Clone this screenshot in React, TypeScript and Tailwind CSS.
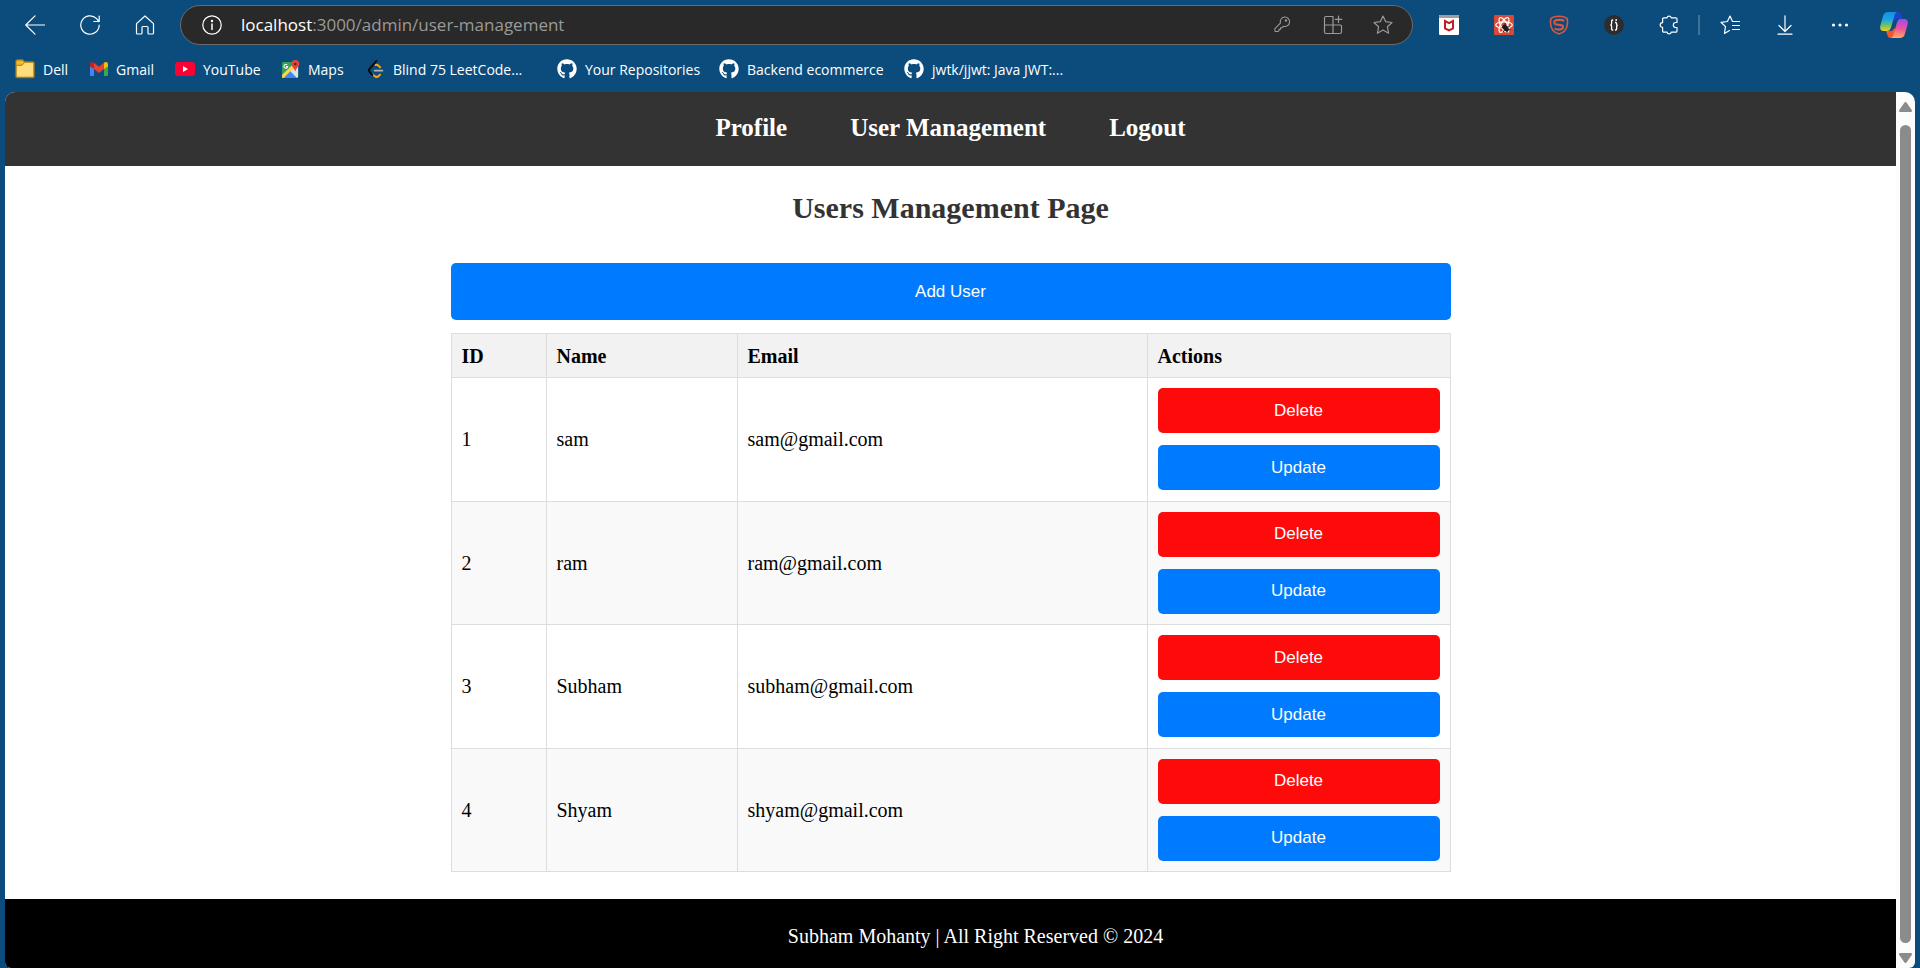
import type { ReactNode } from "react";
import { FaGithub } from "react-icons/fa";

type IconProps = { className?: string; children: ReactNode; box?: string };

function Line({ className = "size-5", children, box = "0 0 20 20" }: IconProps) {
  return (
    <svg className={className} viewBox={box} fill="none" stroke="currentColor" strokeWidth="1.2" strokeLinecap="round" strokeLinejoin="round" aria-hidden="true">
      {children}
    </svg>
  );
}

const BackIcon = () => (
  <Line>
    <path d="M19.500 10H.8M10 .8L.8 10l9.200 9.200" />
  </Line>
);

const ReloadIcon = () => (
  <Line>
    <path d="M19.200 10a9.200 9.200 0 1 1-2.600-6.400L19 6.500M19.200 1v5.500h-5.500" />
  </Line>
);

const HomeIcon = () => (
  <Line>
    <path d="M1.500 8.600L10 1l8.500 7.600V18a1 1 0 0 1-1 1H14a1 1 0 0 1-1-1v-5.500a1 1 0 0 0-1-1H8a1 1 0 0 0-1 1V18a1 1 0 0 1-1 1H2.500a1 1 0 0 1-1-1z" />
  </Line>
);

const InfoIcon = () => (
  <Line>
    <circle cx="10" cy="10" r="9.200" />
    <path d="M10 9v5.500" strokeWidth="1.500" />
    <circle cx="10" cy="6" r="0.600" fill="currentColor" />
  </Line>
);

const KeyIcon = () => (
  <Line className="size-[18px]">
    <path d="M12 1.200a5.200 5.200 0 1 1-1.300 10.200L9 13H7.300v1.800H5.500v1.500l-1 1H1.800a.8.8 0 0 1-.8-.8v-2.600l6.100-6.100A5.200 5.200 0 0 1 12 1.200z" />
    <circle cx="13.300" cy="5" r="0.800" />
  </Line>
);

const AppsIcon = () => (
  <Line>
    <path d="M10 1.500H3A1.500 1.500 0 0 0 1.500 3v14A1.500 1.500 0 0 0 3 18.500h14a1.500 1.500 0 0 0 1.500-1.500v-6a1 1 0 0 0-1-1h-16M10 1.500v17M15.500 1v6.500M12.200 4.300h6.600" />
  </Line>
);

const StarIcon = () => (
  <Line>
    <path d="M10 1l2.700 5.700 6.300.8-4.600 4.300 1.200 6.400L10 15.100l-5.600 3.100 1.200-6.400L1 7.500l6.300-.8z" />
  </Line>
);

const FavoritesIcon = () => (
  <Line>
    <path d="M18.500 6.500h-6L10 1 7.400 6.500 1 7.300l4.500 4.300L4.400 18.500 9.500 15.600M12.500 10.500h7M12.500 14.500h7M12.500 6.500h7" />
  </Line>
);

const PuzzleIcon = () => (
  <Line>
    <path d="M8 2.800a2.200 2.200 0 0 1 4.300 0h4.500a1.200 1.200 0 0 1 1.200 1.200v3.500h-1.200a2.500 2.500 0 0 0 0 5H18V16a1.200 1.200 0 0 1-1.200 1.200h-4.500a2.200 2.200 0 0 1-4.300 0H4.800A1.200 1.200 0 0 1 3.600 16v-3.600a2.400 2.400 0 0 1 0-4.800V4a1.200 1.200 0 0 1 1.200-1.200z" />
  </Line>
);

const DownloadIcon = () => (
  <Line>
    <path d="M10 .8v15.400M4 10.500l6 6 6-6M3 19.200h14" />
  </Line>
);

const MoreIcon = () => (
  <svg className="size-[18px]" viewBox="0 0 18 18" fill="currentColor" aria-hidden="true">
    <circle cx="2.500" cy="9" r="1.600" />
    <circle cx="9" cy="9" r="1.600" />
    <circle cx="15.500" cy="9" r="1.600" />
  </svg>
);

const ShieldExtensionIcon = () => (
  <svg className="size-5" viewBox="0 0 20 20" aria-hidden="true">
    <rect width="20" height="20" rx="1" fill="#fff" />
    <path d="M1 0h18a1 1 0 0 1 1 1v2H0V1a1 1 0 0 1 1-1z" fill="#a39da0" />
    <path d="M6 6v7.300l4 2 4-2V6l-4 2.200z" fill="none" stroke="#c01f26" strokeWidth="2" />
  </svg>
);

const ReactExtensionIcon = () => (
  <svg className="size-5" viewBox="0 0 20 20" aria-hidden="true">
    <rect width="20" height="20" rx="1" fill="#d94936" />
    <g fill="none" stroke="#fff" strokeWidth="1.300">
      <ellipse cx="10" cy="10" rx="8.300" ry="3.200" />
      <ellipse cx="10" cy="10" rx="8.300" ry="3.200" transform="rotate(60 10 10)" />
      <ellipse cx="10" cy="10" rx="8.300" ry="3.200" transform="rotate(120 10 10)" />
    </g>
    <ellipse cx="11.500" cy="13" rx="2.500" ry="3.800" transform="rotate(-40 11.500 13)" fill="#1b1b1b" />
    <path d="M7.500 12.500l3 .5M9 17l2-2.500M15.500 11.500l-3 1M11 8l.5 3M16.500 15l-3-.5M13 18v-3" stroke="#1b1b1b" />
  </svg>
);

const SExtensionIcon = () => (
  <svg className="size-5" viewBox="0 0 20 20" fill="none" stroke="#d9583f" aria-hidden="true">
    <path d="M10 1.200C6.500 1.200 3.500 2 1.900 3.600 1 8.500 1.500 12.500 4 15.500c1.700 1.800 3.800 3 6 3.600 2.200-.6 4.300-1.800 6-3.600 2.500-3 3-7 2.100-11.900C16.500 2 13.500 1.200 10 1.200z" strokeWidth="1.600" />
    <path d="M15.300 5.800C13 4.600 7.500 4.600 6 5.700c-1.200 1-.9 3 .6 3.500 1.900.6 4.500.4 6.300 1.100 1.500.7 1.500 2.700.2 3.500-1.900 1-5.300.8-7.600-.2" strokeWidth="2.100" />
  </svg>
);

const BracesExtensionIcon = () => (
  <svg className="size-5" viewBox="0 0 20 20" fill="none" aria-hidden="true">
    <circle cx="10" cy="10" r="10" fill="#2d2d2d" />
    <path d="M9.200 5H8.500Q7.600 5 7.600 6v2.500Q7.600 10 6.300 10q1.300 0 1.300 1.500V14q0 1 .9 1h.7M11 7.500h.6q1 0 1 1v1q0 1 1.200 1-1.200 0-1.200 1V14q0 1-1 1H11" stroke="#fff" strokeWidth="1.300" />
    <circle cx="12.200" cy="5" r="0.900" fill="#fff" />
  </svg>
);

const CopilotIcon = () => (
  <svg className="size-7" viewBox="0 0 28 28" aria-hidden="true">
    <defs>
      <linearGradient id="cpBlue" x1="0" y1="0" x2="0" y2="1">
        <stop offset="0" stopColor="#1490df" />
        <stop offset="0.400" stopColor="#18a6e8" />
        <stop offset="0.700" stopColor="#6fc06a" />
        <stop offset="1" stopColor="#f6cf1c" />
      </linearGradient>
      <linearGradient id="cpPink" x1="0.400" y1="0" x2="0.300" y2="1">
        <stop offset="0" stopColor="#a24ae8" />
        <stop offset="0.500" stopColor="#ee5596" />
        <stop offset="1" stopColor="#fdae5f" />
      </linearGradient>
    </defs>
    <path d="M14 1h4c2 0 2.700 1.500 3.300 3.300L22.500 8H18c-2 0-3 1-3.600 3L12 8z" fill="#1b45c6" />
    <path d="M14.500 27h-4c-2 0-2.700-1.500-3.200-3.300L6 20h4.500c2 0 3-1 3.600-3l3 3z" fill="#f4562f" />
    <path d="M8 1h9c-1.500.6-2.200 2-2.700 4l-3.300 11.500c-.8 2.500-2 3.500-4 3.500H3.500C.5 20-.3 17.500.4 14.500L3.200 4.700C4 2.200 5.500 1 8 1z" fill="url(#cpBlue)" />
    <path d="M20 27h-9c1.500-.6 2.200-2 2.700-4L17 11.500C17.800 9 19 8 21 8h3.500c3 0 3.800 2.500 3.100 5.500l-2.800 9.800C24 25.800 22.500 27 20 27z" fill="url(#cpPink)" />
  </svg>
);

const FolderIcon = () => (
  <svg className="size-5" viewBox="0 0 20 20" aria-hidden="true">
    <path d="M1 2.500A1.500 1.500 0 0 1 2.500 1h5l2 2h8.300A1.300 1.300 0 0 1 19 4.300V17.500a1 1 0 0 1-1 1H2a1 1 0 0 1-1-1z" fill="#ffdc7c" stroke="#a87a10" strokeWidth="1.400" />
    <path d="M1.700 2.800a1 1 0 0 1 1-1h4.700L8.800 3.500 7 6H1.700z" fill="#f3b926" />
    <path d="M1.500 6.300H7l2.300-2.500" fill="none" stroke="#a87a10" />
  </svg>
);

const GmailIcon = () => (
  <svg className="size-[18px]" viewBox="0 0 18 18" aria-hidden="true">
    <path d="M0 5h4v11H1.200A1.200 1.200 0 0 1 0 14.800z" fill="#4285f4" />
    <path d="M14 5h4v9.800a1.200 1.200 0 0 1-1.200 1.200H14z" fill="#34a853" />
    <path d="M0 4.200C0 2 2.200 1.500 4 2.800V9L0 6.500z" fill="#c5221f" />
    <path d="M18 4.200C18 2 15.800 1.500 14 2.800V9l4-2.500z" fill="#fbbc04" />
    <path d="M4 2.800l5 4 5-4V9l-5 4-5-4z" fill="#ea4335" />
  </svg>
);

const YouTubeIcon = () => (
  <svg className="size-5" viewBox="0 0 20 20" aria-hidden="true">
    <rect y="3" width="20" height="14" rx="3" fill="#ff0033" />
    <path d="M8 7l5 3-5 3z" fill="#fff" />
  </svg>
);

const MapsIcon = () => (
  <svg className="size-[18px]" viewBox="0 0 19 19" aria-hidden="true">
    <rect x="0" y="2" width="17" height="17" rx="1.500" fill="#34a05a" />
    <path d="M0 19L17 2v15.500a1.500 1.500 0 0 1-1.500 1.500z" fill="#dfe3e8" />
    <path d="M0 15.800L11 5l2.500 2.500L2 19H1.500A1.500 1.500 0 0 1 0 17.500z" fill="#fcd34d" />
    <path d="M1.800 19l7-7.200 7 7.200z" fill="#4285f4" />
    <path d="M5.500 5.300A2 2 0 1 0 6 7H4.200" fill="none" stroke="#fff" strokeWidth="1.100" />
    <path d="M14 0a4.300 4.300 0 0 1 4.300 4.300c0 3-3.400 3.700-4.300 8.200-.9-4.500-4.300-5.200-4.300-8.200A4.300 4.300 0 0 1 14 0z" fill="#e0453a" />
    <circle cx="14" cy="4.300" r="1.500" fill="#7c1c17" />
  </svg>
);

const LeetCodeIcon = () => (
  <svg className="size-[18px]" viewBox="0 0 18 20" fill="none" strokeLinecap="round" strokeLinejoin="round" strokeWidth="2.200" aria-hidden="true">
    <path d="M8.500 5.500q2-.6 3.500 1l1.500 1.500M5.500 16l2 2q2.500 1.600 4.500-.3l1.500-1.500" stroke="#ffa116" />
    <path d="M9.500 1L2 9.500q-1.600 2 0 4L5 16.500" stroke="#0a0a0a" />
    <path d="M7.500 11.800H16" stroke="#b3b3b3" />
  </svg>
);

const GitHubIcon = () => <FaGithub className="size-5" aria-hidden="true" />;

const bookmarks = [
  { label: "Dell", icon: <FolderIcon />, width: "w-[75px]" },
  { label: "Gmail", icon: <GmailIcon />, width: "w-[85px]" },
  { label: "YouTube", icon: <YouTubeIcon />, width: "w-[107px]" },
  { label: "Maps", icon: <MapsIcon />, width: "w-[85px]" },
  { label: "Blind 75 LeetCode...", icon: <LeetCodeIcon />, width: "w-[190px]" },
  { label: "Your Repositories", icon: <GitHubIcon />, width: "w-[162px]" },
  { label: "Backend ecommerce", icon: <GitHubIcon />, width: "w-[185px]" },
  { label: "jwtk/jjwt: Java JWT:...", icon: <GitHubIcon />, width: "w-[180px]" },
];

const extensions = [
  { label: "Web protection", icon: <ShieldExtensionIcon /> },
  { label: "React tools", icon: <ReactExtensionIcon /> },
  { label: "Page helper", icon: <SExtensionIcon /> },
  { label: "JSON viewer", icon: <BracesExtensionIcon /> },
  { label: "Extensions", icon: <PuzzleIcon /> },
];

const users = [
  { id: 1, name: "sam", email: "sam@gmail.com" },
  { id: 2, name: "ram", email: "ram@gmail.com" },
  { id: 3, name: "Subham", email: "subham@gmail.com" },
  { id: 4, name: "Shyam", email: "shyam@gmail.com" },
];

function ToolButton({ label, children }: { label: string; children: ReactNode }) {
  return (
    <button type="button" aria-label={label} className="flex h-10 w-[55px] shrink-0 items-center justify-center">
      {children}
    </button>
  );
}

function Toolbar() {
  return (
    <div className="flex h-[50px] items-center pl-[7px]">
      <ToolButton label="Back"><BackIcon /></ToolButton>
      <ToolButton label="Refresh"><ReloadIcon /></ToolButton>
      <ToolButton label="Home"><HomeIcon /></ToolButton>
      <div className="ml-2 flex h-10 flex-1 items-center rounded-full border border-[#6b6b6b] bg-[#292929] pl-[21px] pr-1 text-[#9a9a9a]">
        <span className="text-white"><InfoIcon /></span>
        <p className="ml-[19px] flex-1 whitespace-nowrap text-[17px]">
          <span className="text-white">localhost</span>:3000/admin/user-management
        </p>
        <button type="button" aria-label="Saved passwords" className="flex w-[50px] justify-center"><KeyIcon /></button>
        <button type="button" aria-label="Install app" className="flex w-[50px] justify-center"><AppsIcon /></button>
        <button type="button" aria-label="Add to favorites" className="flex w-[50px] justify-center"><StarIcon /></button>
      </div>
      <div className="ml-2 flex items-center">
        {extensions.map((item) => (
          <ToolButton key={item.label} label={item.label}>{item.icon}</ToolButton>
        ))}
        <span className="mx-[2px] h-5 w-[2px] bg-[#42729a]" />
        <ToolButton label="Favorites"><FavoritesIcon /></ToolButton>
        <ToolButton label="Downloads"><DownloadIcon /></ToolButton>
        <ToolButton label="More"><MoreIcon /></ToolButton>
        <button type="button" aria-label="Copilot" className="flex h-10 w-[53px] items-center justify-center"><CopilotIcon /></button>
      </div>
    </div>
  );
}

function BookmarkBar() {
  return (
    <nav aria-label="Bookmarks" className="flex h-[42px] items-center pb-1 pl-[15px] text-[14px]">
      {bookmarks.map((item) => (
        <a key={item.label} href="#" className={`flex h-8 shrink-0 items-center gap-2 whitespace-nowrap ${item.width}`}>
          {item.icon}
          {item.label}
        </a>
      ))}
    </nav>
  );
}

function UserTable() {
  return (
    <table className="mt-[13px] h-[539px] w-full table-fixed border-collapse text-left text-[20px] leading-6">
      <colgroup>
        <col className="w-[95px]" />
        <col className="w-[191px]" />
        <col />
        <col className="w-[303px]" />
      </colgroup>
      <thead>
        <tr className="h-11 bg-[#f2f2f2]">
          {["ID", "Name", "Email", "Actions"].map((heading) => (
            <th key={heading} scope="col" className="border border-[#ddd] px-[10px] font-bold">{heading}</th>
          ))}
        </tr>
      </thead>
      <tbody>
        {users.map((user) => (
          <tr key={user.id} className="even:bg-[#f9f9f9]">
            <td className="border border-[#ddd] px-[10px]">{user.id}</td>
            <td className="border border-[#ddd] px-[10px]">{user.name}</td>
            <td className="border border-[#ddd] px-[10px]">{user.email}</td>
            <td className="border border-[#ddd] px-[10px]">
              <div className="flex flex-col gap-3 font-['Liberation_Sans',Arial,sans-serif] text-[17px] text-white">
                <button type="button" className="h-[45px] rounded-[5px] bg-[#ff0a0a]">Delete</button>
                <button type="button" className="h-[45px] rounded-[5px] bg-[#007bff]">Update</button>
              </div>
            </td>
          </tr>
        ))}
      </tbody>
    </table>
  );
}

function Scrollbar() {
  return (
    <div aria-hidden="true" className="flex w-[19px] shrink-0 flex-col items-center bg-[#fcfcfc] pt-[10px] pb-[5px] text-[#8b8b8b]">
      <svg className="h-[10px] w-[13px]" viewBox="0 0 13 10" fill="currentColor">
        <path d="M5.300.8a1.500 1.500 0 0 1 2.400 0l5 7.200a1.200 1.200 0 0 1-1 2H1.300a1.200 1.200 0 0 1-1-2z" />
      </svg>
      <span className="mt-[13px] mb-[10px] w-[11px] flex-1 rounded-full bg-[#8b8b8b]" />
      <svg className="h-[10px] w-[13px]" viewBox="0 0 13 10" fill="currentColor">
        <path d="M5.300 9.200a1.500 1.500 0 0 0 2.400 0l5-7.200a1.200 1.200 0 0 0-1-2H1.300a1.200 1.200 0 0 0-1 2z" />
      </svg>
    </div>
  );
}

export default function App() {
  return (
    <div className="flex min-h-screen flex-col bg-[#0c4c7c] font-['Open_Sans','Noto_Sans',sans-serif] text-white">
      <Toolbar />
      <BookmarkBar />
      <div className="mx-[5px] flex flex-1 overflow-hidden rounded-t-[10px] rounded-b-[6px]">
        <div className="flex flex-1 flex-col bg-white font-['Liberation_Serif','Times_New_Roman',serif] text-black">
          <header className="flex h-[74px] items-center justify-center bg-[#333] pb-[2px] text-white">
            <nav aria-label="Main" className="flex gap-[63px] text-[25px] font-bold">
              <a href="#">Profile</a>
              <a href="#">User Management</a>
              <a href="#">Logout</a>
            </nav>
          </header>
          <main className="mx-auto w-full max-w-[1000px] pb-[27px]">
            <h1 className="mt-[24px] text-center text-[30px] leading-9 font-bold text-[#333]">Users Management Page</h1>
            <button type="button" className="mt-[37px] h-[57px] w-full rounded-[5px] bg-[#007bff] font-['Liberation_Sans',Arial,sans-serif] text-[17px] text-white">Add User</button>
            <UserTable />
          </main>
          <footer className="flex-1 bg-black pt-[25px] pb-5 pl-[50px] text-center text-[20px] leading-6 text-white">
            Subham Mohanty | All Right Reserved © 2024
          </footer>
        </div>
        <Scrollbar />
      </div>
    </div>
  );
}
